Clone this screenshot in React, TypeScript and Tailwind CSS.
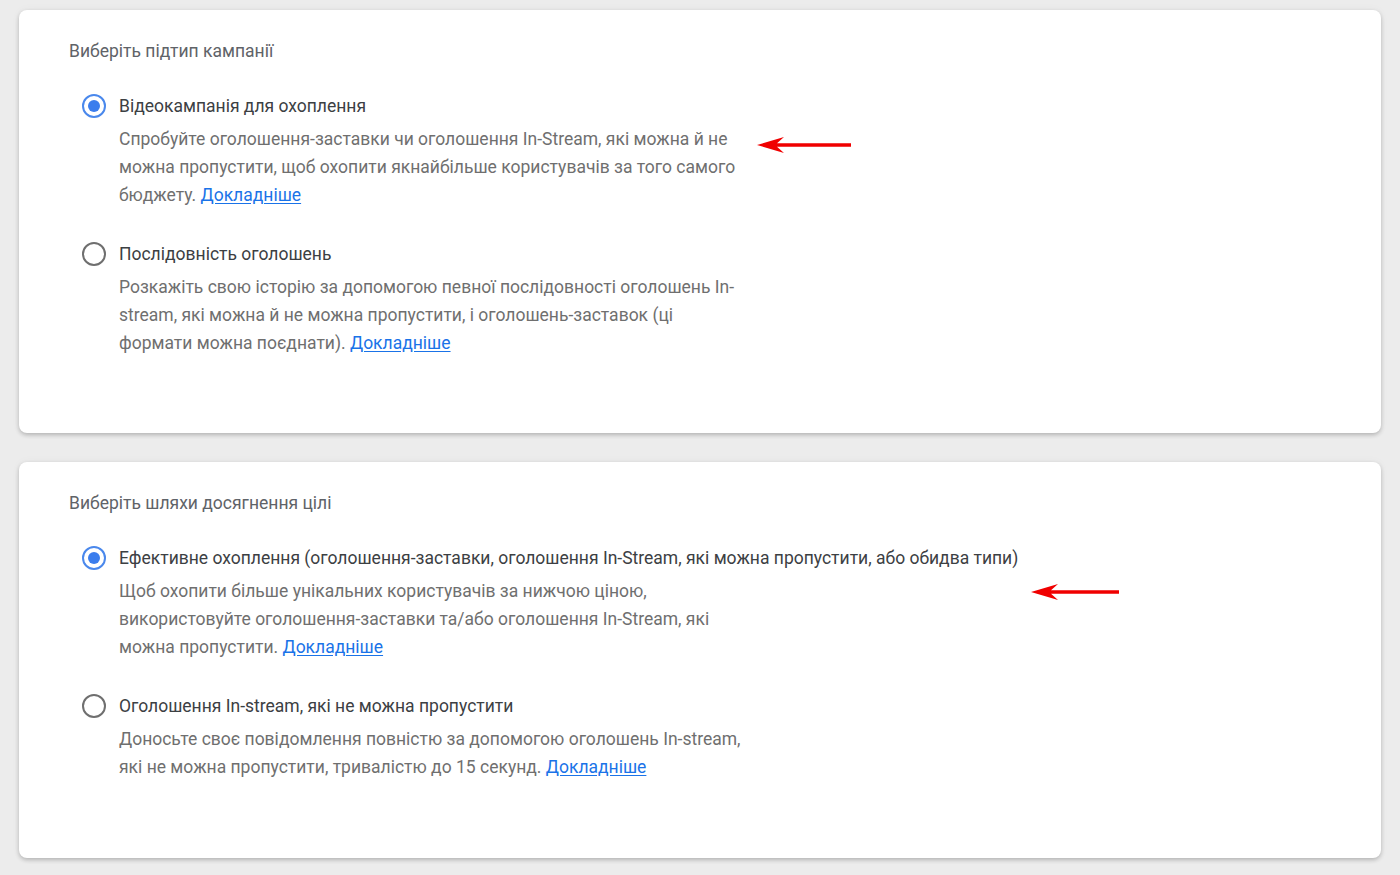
const font = { fontFamily: 'Roboto, "Noto Sans", sans-serif' }

type Option = {
  label: string
  desc: string
  checked: boolean
}

const cards: { title: string; options: Option[]; arrow: string; w: number }[] = [
  {
    title: 'Виберіть підтип кампанії',
    arrow: 'left-[738px] top-[125px]',
    w: 94,
    options: [
      {
        label: 'Відеокампанія для охоплення',
        desc: 'Спробуйте оголошення-заставки чи оголошення In-Stream, які можна й не можна пропустити, щоб охопити якнайбільше користувачів за того самого бюджету.',
        checked: true,
      },
      {
        label: 'Послідовність оголошень',
        desc: 'Розкажіть свою історію за допомогою певної послідовності оголошень In-stream, які можна й не можна пропустити, і оголошень-заставок (ці формати можна поєднати).',
        checked: false,
      },
    ],
  },
  {
    title: 'Виберіть шляхи досягнення цілі',
    arrow: 'left-[1012px] top-[120px]',
    w: 88,
    options: [
      {
        label: 'Ефективне охоплення (оголошення-заставки, оголошення In-Stream, які можна пропустити, або обидва типи)',
        desc: 'Щоб охопити більше унікальних користувачів за нижчою ціною, використовуйте оголошення-заставки та/або оголошення In-Stream, які можна пропустити.',
        checked: true,
      },
      {
        label: 'Оголошення In-stream, які не можна пропустити',
        desc: 'Доносьте своє повідомлення повністю за допомогою оголошень In-stream, які не можна пропустити, тривалістю до 15 секунд.',
        checked: false,
      },
    ],
  },
]

function Radio({ checked }: { checked: boolean }) {
  if (checked) {
    return (
      <span className="flex h-6 w-6 shrink-0 items-center justify-center rounded-full border-[2.5px] border-[#4a88ec]">
        <span className="h-[12px] w-[12px] rounded-full bg-[#3b7ded]" />
      </span>
    )
  }
  return <span className="h-6 w-6 shrink-0 rounded-full border-2 border-[#6f6f6f]" />
}

// red annotation arrow pointing left
function Arrow({ className, w }: { className: string; w: number }) {
  return (
    <svg className={`absolute ${className}`} width={w} height="20" viewBox={`0 0 ${w} 20`} aria-hidden>
      <path d={`M0 10 L27 2 L20 8.3 L${w} 8.3 L${w} 11.7 L20 11.7 L27 18 Z`} fill="#f00000" />
    </svg>
  )
}

export default function App() {
  return (
    <div className="min-h-[875px] w-full bg-[#ececec] px-[19px] pt-[10px]" style={font}>
      <div className="flex flex-col gap-[29px]">
        {cards.map((card, ci) => (
          <div
            key={ci}
            className={`relative rounded-lg bg-white pl-[50px] pt-[29px] shadow-[0_2px_4px_rgba(0,0,0,0.22),0_0_10px_rgba(0,0,0,0.04)] ${ci === 0 ? 'pb-[76px]' : 'pb-[77px]'}`}
          >
            <div className="text-[17.5px] leading-6 text-[#5f6368]">{card.title}</div>
            <div className={`flex flex-col ${ci === 0 ? 'mt-[31px] gap-[33px]' : 'mt-[31px] gap-[33px]'}`}>
              {card.options.map((opt, oi) => (
                <div key={oi}>
                  <div className="flex items-center gap-[13px] pl-[13px]">
                    <Radio checked={opt.checked} />
                    <span className="text-[17.5px] leading-6 text-[#3c4043]">{opt.label}</span>
                  </div>
                  <p className="mt-[7px] w-[626px] pl-[50px] text-[17.5px] leading-7 text-[#6f6f6f] box-content">
                    {opt.desc}{' '}
                    <a href="#" className="text-[#1a73e8] underline underline-offset-2">
                      Докладніше
                    </a>
                  </p>
                </div>
              ))}
            </div>
            <Arrow className={card.arrow} w={card.w} />
          </div>
        ))}
      </div>
    </div>
  )
}
